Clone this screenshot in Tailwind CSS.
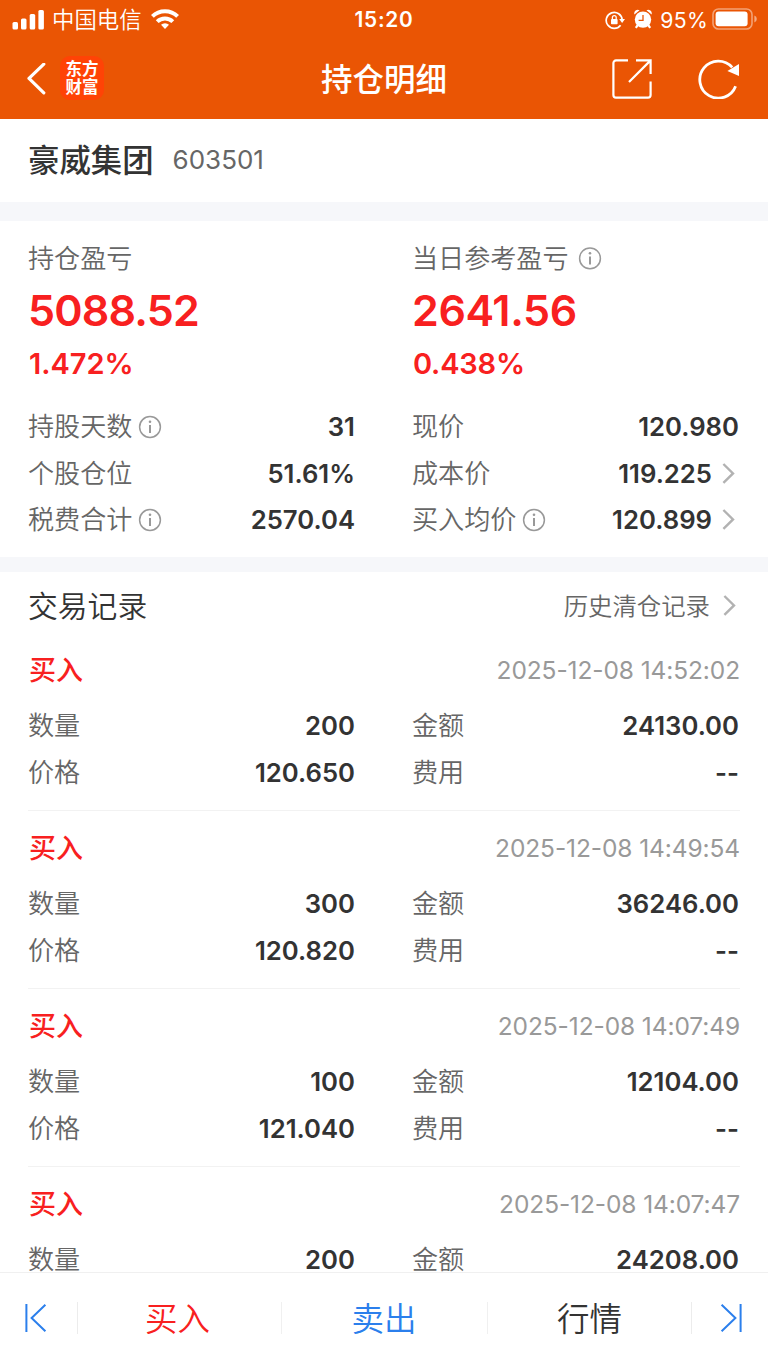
<!DOCTYPE html>
<html lang="zh-CN">
<head>
  <meta charset="UTF-8">
  <meta name="viewport" content="width=device-width, initial-scale=1.0">
  <title>持仓明细</title>
  <script src="https://cdn.jsdelivr.net/npm/@tailwindcss/browser@4"></script>
</head>
<body class="bg-white text-[#333] font-['Inter','Noto_Sans_CJK_SC',sans-serif]">
  <div class="h-[1366px] flex flex-col overflow-hidden">
    <!-- Header -->
    <header class="h-[119px] shrink-0 bg-[#ea5504] text-white">
      <!-- Status bar -->
      <div class="h-10 grid grid-cols-3 items-center">
        <div class="flex items-center pl-3">
          <svg class="w-8 h-5" viewBox="0 0 32 20" fill="currentColor">
            <rect x="0.5" y="12" width="5.5" height="7.5" rx="1.5"/>
            <rect x="9" y="8.5" width="5.5" height="11" rx="1.5"/>
            <rect x="17.7" y="4" width="5.5" height="15.5" rx="1.5"/>
            <rect x="26.4" y="0" width="5.5" height="19.5" rx="1.5"/>
          </svg>
          <span class="ml-2 text-[22.4px] leading-10 font-[350]">中国电信</span>
          <svg class="ml-[9px] -mt-[3px] w-7 h-5" viewBox="0 0 28 20" fill="none" stroke="currentColor" stroke-width="4">
            <path d="M1.4 7.4a18 18 0 0 1 25.2 0"/>
            <path d="M6.2 12.6a11.2 11.2 0 0 1 15.6 0"/>
            <path d="M14 20l-4-4.2a5.8 5.8 0 0 1 8 0z" fill="currentColor" stroke="none"/>
          </svg>
        </div>
        <div class="text-center text-[20.8px] leading-10 font-semibold tracking-[0.8px]">15:20</div>
        <div class="flex items-center justify-end pr-[10px]">
          <svg class="w-5 h-5" viewBox="0 0 20 20" fill="none" stroke="currentColor" stroke-width="1.7">
            <path d="M15.6 15.2a8 8 0 1 1 1.6-5.2"/>
            <path d="M14.2 9h5.8l-2.9 4z" fill="currentColor" stroke="none"/>
            <rect x="6" y="9" width="6.6" height="5.2" rx=".8" fill="currentColor" stroke="none"/>
            <path d="M7.4 9V7.6a1.9 1.9 0 0 1 3.8 0V9" stroke-width="1.3"/>
          </svg>
          <svg class="ml-[9px] -mt-[2px] w-[18px] h-5" viewBox="0 0 18 20" fill="currentColor">
            <circle cx="9" cy="10.6" r="8.2"/>
            <path d="M.4 5.4A3.6 3.6 0 0 1 5.6 1.2zM17.6 5.4a3.6 3.6 0 0 0-5.2-4.2z"/>
            <path d="M3.8 16l-2 2.8M14.2 16l2 2.8" stroke="currentColor" stroke-width="2.2"/>
            <path d="M9 6v5.4H4.6" fill="none" stroke="#ea5504" stroke-width="1.3"/>
          </svg>
          <span class="ml-2 text-[21.2px] leading-10 tracking-[0.3px]">95%</span>
          <svg class="ml-1 -mt-[2px] w-[46px] h-[22px]" viewBox="0 0 46 22">
            <rect x="1" y="1" width="39" height="20" rx="5.5" fill="none" stroke="#fff" stroke-opacity=".45" stroke-width="1.6"/>
            <rect x="3.6" y="3.6" width="32" height="14.6" rx="3" fill="#fff"/>
            <path d="M42.4 7.6a3.6 3.6 0 0 1 0 6.8z" fill="#fff" fill-opacity=".5"/>
          </svg>
        </div>
      </div>
      <!-- Nav bar -->
      <div class="h-[78px] grid grid-cols-3 items-center">
        <div class="flex items-center pl-[26px]">
          <svg class="w-5 h-8" viewBox="0 0 20 32" fill="none" stroke="currentColor" stroke-width="3.2" stroke-linecap="round" stroke-linejoin="round"><path d="M17.8 1.2L3 15.4l14.8 14.4"/></svg>
          <div class="ml-[14px] -mt-[2px] w-11 h-11 pt-[4px] rounded-[10px] bg-[#ff4306] text-center text-[16.5px] leading-[18px] font-bold">东方<br>财富</div>
        </div>
        <h1 class="pt-[2px] text-center text-[31.5px] leading-[76px] font-medium">持仓明细</h1>
        <div class="flex items-center justify-end pr-7 gap-[46px]">
          <svg class="w-10 h-10" viewBox="0 0 40 40" fill="none" stroke="currentColor" stroke-width="2.2">
            <path d="M16 1.4H4a2.6 2.6 0 0 0-2.6 2.6v32A2.6 2.6 0 0 0 4 38.6h32a2.6 2.6 0 0 0 2.6-2.6V22.5M24 1.4h14.6V15M38.6 1.4L17 23"/>
          </svg>
          <svg class="w-[42px] h-10" viewBox="0 0 42 40" fill="none" stroke="currentColor" stroke-width="2.8">
            <path d="M37.6 27.2A18.5 18.5 0 1 1 34.2 8.4"/>
            <path d="M41 5v12L29.4 12z" fill="currentColor" stroke="none"/>
          </svg>
        </div>
      </div>
    </header>

    <!-- Stock name -->
    <div class="h-[83px] shrink-0 flex items-center pl-7">
      <h2 class="pt-[2px] text-[31.4px] leading-[83px] font-medium">豪威集团</h2>
      <span class="ml-[19px] text-[26px] leading-[81px] pb-[2px] text-[#666]">603501</span>
    </div>
    <div class="h-[19px] shrink-0 bg-[#f6f7fa]"></div>

    <!-- Summary -->
    <section class="h-[336px] shrink-0 px-7 pt-[13px]">
      <div class="grid grid-cols-[327px_327px] gap-x-[57px] text-[#f82020]">
        <div>
          <p class="text-[26.1px] leading-[50px] text-[#666] font-[350]">持仓盈亏</p>
          <p class="-mt-px text-[43px] leading-[54px] font-semibold tracking-[-0.8px]">5088.52</p>
          <p class="pl-px text-[29px] leading-[54px] font-semibold">1.472%</p>
        </div>
        <div>
          <p class="flex items-center text-[26.1px] leading-[50px] text-[#666] font-[350]">当日参考盈亏
            <svg class="ml-[9px] w-6 h-6" viewBox="0 0 24 24" fill="none" stroke="#999" stroke-width="1.5"><circle cx="12" cy="11.4" r="10.4"/><path d="M12 9.4v8" stroke-width="2"/><circle cx="12" cy="6.2" r="1.3" fill="#999" stroke="none"/></svg>
          </p>
          <p class="-mt-px text-[43px] leading-[54px] font-semibold tracking-[-0.4px]">2641.56</p>
          <p class="pl-px text-[29px] leading-[54px] font-semibold tracking-[-0.2px]">0.438%</p>
        </div>
      </div>
      <div id="summary-rows" class="mt-[13.2px] grid grid-cols-[327px_327px] gap-x-[57px]"></div>
    </section>
    <div class="h-[15px] shrink-0 bg-[#f6f7fa]"></div>

    <!-- Trade records -->
    <section class="flex-1 min-h-0 overflow-hidden px-7">
      <div class="h-[61px] flex items-center justify-between pt-[6px]">
        <h3 class="text-[29.8px] leading-[54px] font-[350]">交易记录</h3>
        <a href="#" class="flex items-center text-[24.4px] leading-[54px] text-[#666] font-[350]">历史清仓记录
          <svg class="ml-[13px] mr-1 w-[13px] h-[22px]" viewBox="0 0 13 22" fill="none" stroke="#b2b2b2" stroke-width="2.4"><path d="M1.4 1L11 10.4l-9.6 9.4"/></svg>
        </a>
      </div>
      <div id="records"></div>
    </section>

    <!-- Bottom bar -->
    <footer class="h-[94px] shrink-0 border-t border-[#f0f0f0] grid grid-cols-[78px_204px_206px_204px_76px] items-center text-center text-[32.5px] leading-[60px] font-[350]">
      <a href="#" class="-mt-[3px] h-8 flex items-center justify-end pr-[30px] border-r border-[#ececec]">
        <svg class="w-[22px] h-7" viewBox="0 0 22 28" fill="none" stroke="#2b7fec" stroke-width="2"><path d="M1.4 0v28M20.4 .8L6.6 14l13.8 13.2"/></svg>
      </a>
      <a href="#" class="-mt-[3px] h-8 flex items-center justify-center border-r border-[#f0f0f0] text-[#f82020] pr-1 pt-1">买入</a>
      <a href="#" class="-mt-[3px] h-8 flex items-center justify-center border-r border-[#f0f0f0] text-[#2b7fec] pr-px pt-1">卖出</a>
      <a href="#" class="-mt-[3px] h-8 flex items-center justify-center border-r border-[#ececec] pt-1">行情</a>
      <a href="#" class="-mt-[3px] h-8 flex items-center pl-7">
        <svg class="w-[22px] h-7" viewBox="0 0 22 28" fill="none" stroke="#2b7fec" stroke-width="2"><path d="M20.6 0v28M1.6 .8L15.4 14 1.6 27.2"/></svg>
      </a>
    </footer>
  </div>

  <script>
    const infoIcon = `<svg class="ml-[6px] w-6 h-6" viewBox="0 0 24 24" fill="none" stroke="#999" stroke-width="1.5"><circle cx="12" cy="12" r="10.4"/><path d="M12 10v8" stroke-width="2"/><circle cx="12" cy="6.8" r="1.3" fill="#999" stroke="none"/></svg>`;
    const arrowIcon = `<svg class="ml-[10px] mr-1 w-[13px] h-[22px]" viewBox="0 0 13 22" fill="none" stroke="#b2b2b2" stroke-width="2.4"><path d="M1.4 1L11 10.4l-9.6 9.4"/></svg>`;

    const summary = [
      { label: '持股天数', value: '31', info: true },
      { label: '现价', value: '120.980' },
      { label: '个股仓位', value: '51.61%' },
      { label: '成本价', value: '119.225', arrow: true },
      { label: '税费合计', value: '2570.04', info: true },
      { label: '买入均价', value: '120.899', info: true, arrow: true }
    ];

    const records = [
      { time: '2025-12-08 14:52:02', count: '200', amount: '24130.00', price: '120.650' },
      { time: '2025-12-08 14:49:54', count: '300', amount: '36246.00', price: '120.820' },
      { time: '2025-12-08 14:07:49', count: '100', amount: '12104.00', price: '121.040' },
      { time: '2025-12-08 14:07:47', count: '200', amount: '24208.00', price: '120.650' }
    ];

    // One label / value pair
    function row(item) {
      return `
        <div class="h-[46.5px] flex items-center justify-between leading-[46px]">
          <span class="flex items-center text-[26.1px] text-[#666] font-[350]">${item.label}${item.info ? infoIcon : ''}</span>
          <span class="flex items-center text-[25.7px] font-semibold">${item.value}${item.arrow ? arrowIcon : ''}</span>
        </div>`;
    }

    document.getElementById('summary-rows').innerHTML = summary.map(row).join('');

    document.getElementById('records').innerHTML = records.map(r => `
      <div class="h-[178px] pt-[10px] border-b border-[#f2f2f2]">
        <div class="h-[60px] flex justify-between">
          <span class="pl-px text-[27px] leading-[56px] font-medium text-[#f82020]">买入</span>
          <span class="text-[24.5px] leading-[54px] text-[#999] tracking-[-0.1px]">${r.time}</span>
        </div>
        <div class="grid grid-cols-[327px_327px] gap-x-[57px]">
          ${row({ label: '数量', value: r.count })}
          ${row({ label: '金额', value: r.amount })}
          ${row({ label: '价格', value: r.price })}
          ${row({ label: '费用', value: '--' })}
        </div>
      </div>`).join('');
  </script>
</body>
</html>
